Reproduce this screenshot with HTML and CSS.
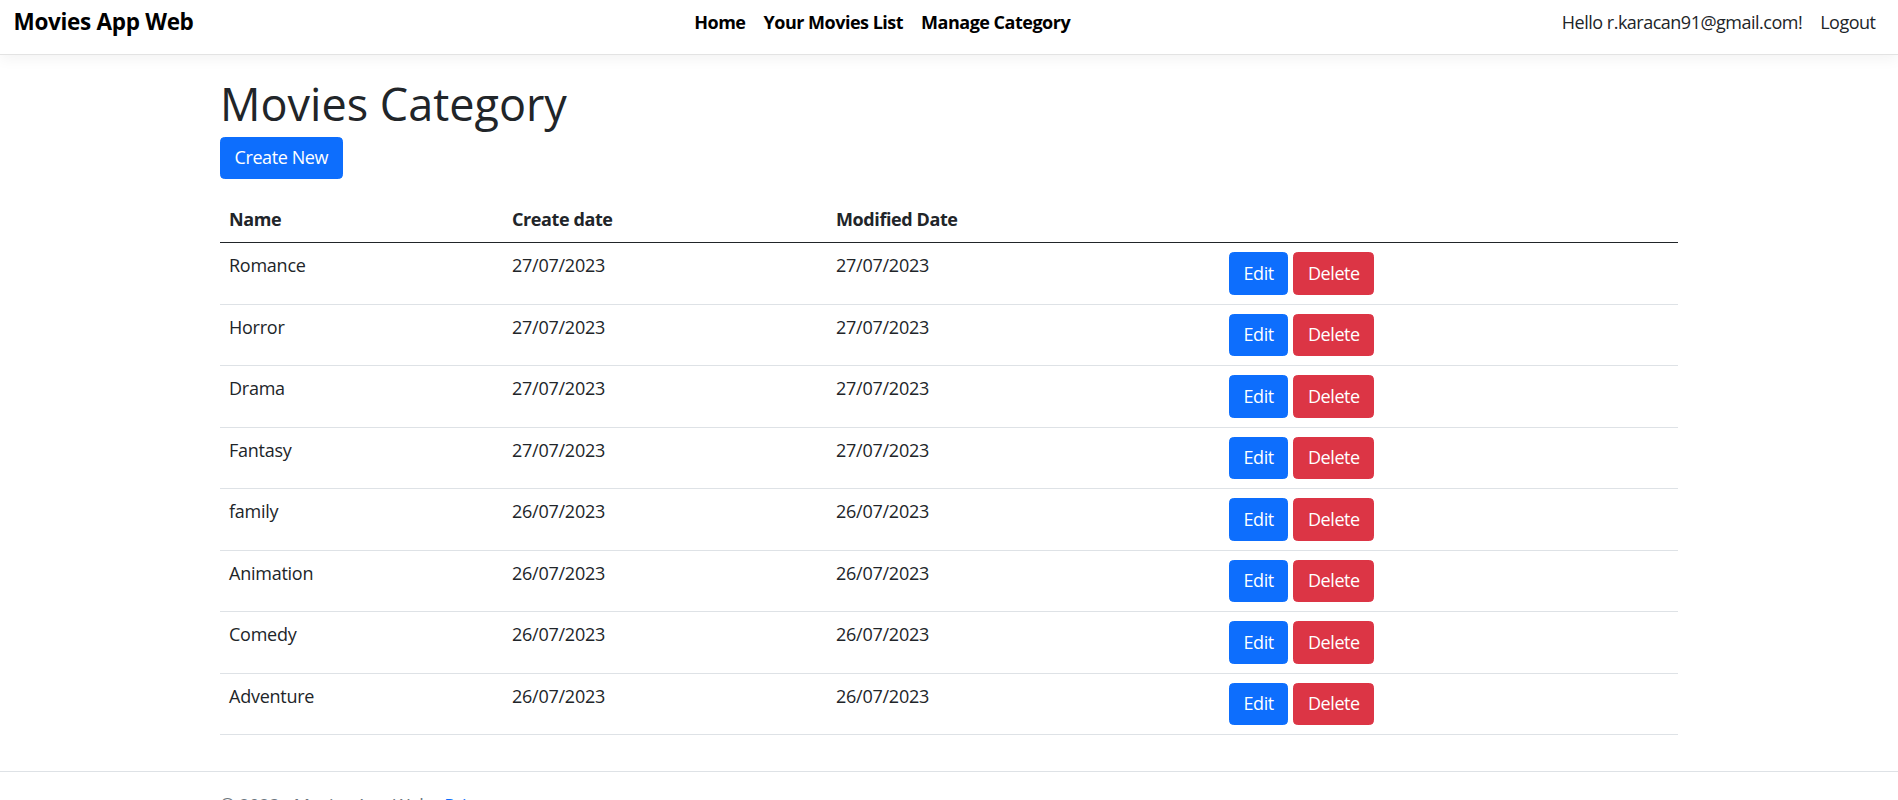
FILE: index.html
```html
<!DOCTYPE html>
<html lang="en">
<head>
<meta charset="utf-8">
<title>Movies Category - Movies App Web</title>
<link rel="stylesheet" href="styles.css">
</head>
<body>
<header class="navbar">
  <a class="brand" href="#">Movies App Web</a>
  <nav class="main-nav">
    <a class="nav-link strong" href="#">Home</a>
    <a class="nav-link strong" href="#">Your Movies List</a>
    <a class="nav-link strong" href="#">Manage Category</a>
  </nav>
  <div class="user-nav">
    <a class="nav-link" href="#">Hello r.karacan91@gmail.com!</a>
    <a class="nav-link" href="#">Logout</a>
  </div>
</header>

<div class="container page">
  <main>
    <h1 class="title">Movies Category</h1>
    <div class="create-row">
      <a class="btn btn-primary" href="#">Create New</a>
    </div>
    <table class="table">
      <thead>
        <tr>
          <th class="col-name">Name</th>
          <th class="col-created">Create date</th>
          <th class="col-modified">Modified Date</th>
          <th></th>
        </tr>
      </thead>
      <tbody>
        <tr><td>Romance</td><td>27/07/2023</td><td>27/07/2023</td><td><div class="actions"><a class="btn btn-primary" href="#">Edit</a><a class="btn btn-danger" href="#">Delete</a></div></td></tr>
        <tr><td>Horror</td><td>27/07/2023</td><td>27/07/2023</td><td><div class="actions"><a class="btn btn-primary" href="#">Edit</a><a class="btn btn-danger" href="#">Delete</a></div></td></tr>
        <tr><td>Drama</td><td>27/07/2023</td><td>27/07/2023</td><td><div class="actions"><a class="btn btn-primary" href="#">Edit</a><a class="btn btn-danger" href="#">Delete</a></div></td></tr>
        <tr><td>Fantasy</td><td>27/07/2023</td><td>27/07/2023</td><td><div class="actions"><a class="btn btn-primary" href="#">Edit</a><a class="btn btn-danger" href="#">Delete</a></div></td></tr>
        <tr><td>family</td><td>26/07/2023</td><td>26/07/2023</td><td><div class="actions"><a class="btn btn-primary" href="#">Edit</a><a class="btn btn-danger" href="#">Delete</a></div></td></tr>
        <tr><td>Animation</td><td>26/07/2023</td><td>26/07/2023</td><td><div class="actions"><a class="btn btn-primary" href="#">Edit</a><a class="btn btn-danger" href="#">Delete</a></div></td></tr>
        <tr><td>Comedy</td><td>26/07/2023</td><td>26/07/2023</td><td><div class="actions"><a class="btn btn-primary" href="#">Edit</a><a class="btn btn-danger" href="#">Delete</a></div></td></tr>
        <tr><td>Adventure</td><td>26/07/2023</td><td>26/07/2023</td><td><div class="actions"><a class="btn btn-primary" href="#">Edit</a><a class="btn btn-danger" href="#">Delete</a></div></td></tr>
      </tbody>
    </table>
  </main>
</div>

<footer class="footer">
  <div class="container">&copy; 2023 - Movies App Web - <a class="footer-link" href="#">Privacy</a></div>
</footer>
</body>
</html>
```

FILE: styles.css
```css
* { box-sizing: border-box; }

html, body {
  overflow: hidden;
}

body {
  margin: 0;
  font-family: "Open Sans", "Noto Sans", "Liberation Sans", sans-serif;
  font-size: 18px;
  line-height: 1.5;
  letter-spacing: -0.25px;
  color: #212529;
  background: #fff;
}

a { text-decoration: none; }

/* ---------- navbar ---------- */
.navbar {
  display: flex;
  align-items: center;
  height: 55px;
  padding: 0 13.5px 10px;
  background: #fff;
  border-bottom: 1px solid #e3e3e3;
  box-shadow: 0 4.5px 13.5px rgba(0, 0, 0, 0.05);
}

.brand {
  font-size: 22.5px;
  line-height: 33.75px;
  font-weight: 700;
  letter-spacing: -0.3px;
  color: #000;
  margin-right: 18px;
  white-space: nowrap;
}

.main-nav {
  flex: 1;
  display: flex;
  justify-content: center;
}

.user-nav {
  display: flex;
}

.nav-link {
  display: block;
  padding: 9px;
  line-height: 27px;
  letter-spacing: -0.5px;
  color: #212529;
  white-space: nowrap;
}

.nav-link.strong {
  font-weight: 700;
  color: #000;
}

/* ---------- page ---------- */
.container {
  max-width: 1485px;
  margin: 0 auto;
  padding: 0 13.5px;
}

.page main {
  padding-top: 21.5px;
  padding-bottom: 18px;
}

.title {
  margin: 0 0 6px;
  font-size: 45px;
  line-height: 54px;
  font-weight: 500;
  letter-spacing: 0;
}

.create-row {
  display: flex;
  margin-bottom: 18px;
}

.btn {
  display: inline-block;
  padding: 6.75px 13.5px;
  font-size: 18px;
  line-height: 27px;
  letter-spacing: -0.4px;
  border: 1px solid transparent;
  border-radius: 4.5px;
  color: #fff;
  text-align: center;
  white-space: nowrap;
}

.btn-primary {
  background: #0d6efd;
  border-color: #0d6efd;
}

.btn-danger {
  background: #dc3545;
  border-color: #dc3545;
}

/* ---------- table ---------- */
.table {
  width: 100%;
  border-collapse: collapse;
  margin-bottom: 18px;
  vertical-align: top;
}

.table th,
.table td {
  padding: 9px;
  text-align: left;
  vertical-align: top;
  line-height: 27px;
}

.table th {
  font-weight: 700;
  letter-spacing: -0.4px;
  border-bottom: 1px solid #212529;
}

.table td {
  border-bottom: 1px solid #dee2e6;
}

.col-name { width: 283px; }
.col-created { width: 324px; }
.col-modified { width: 393px; }

.actions {
  display: flex;
  gap: 5px;
}

/* ---------- footer ---------- */
.footer {
  border-top: 1px solid #dee2e6;
  line-height: 67.5px;
  color: #6c757d;
  white-space: nowrap;
}

.footer-link {
  color: #0d6efd;
}
```
